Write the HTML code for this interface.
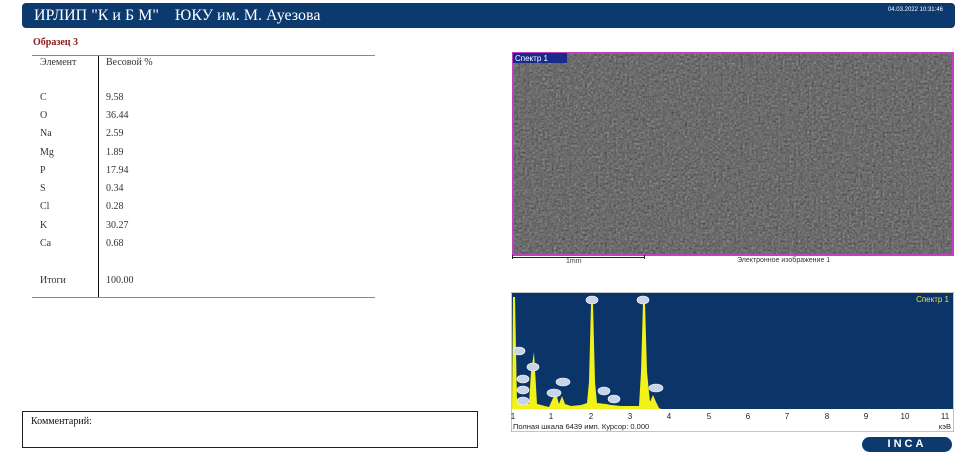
<!DOCTYPE html>
<html><head><meta charset="utf-8"><style>
body{margin:0;width:974px;height:461px;background:#fff;position:relative;overflow:hidden;font-family:"Liberation Serif",serif;}
.a{position:absolute;}
.hdr{left:22px;top:3px;width:933px;height:25px;background:#0d3a6e;border-radius:4px;color:#fff;}
.t{font-size:10px;color:#333;}
.s{font-family:"Liberation Sans",sans-serif;}
</style></head><body>
<div class="a hdr"><span class="a" style="left:12px;top:4px;font-size:16px;">ИРЛИП "К и Б М"&nbsp;&nbsp;&nbsp; ЮКУ им. М. Ауезова</span>
<span class="a s" style="right:12px;top:4px;font-size:6px;">04.03.2022 10:31:46</span></div>
<div class="a" style="left:33px;top:37px;font-size:10px;color:#8b1a1a;font-weight:bold;">Образец 3</div>
<div class="a" style="left:32px;top:55px;width:343px;height:1px;background:#888"></div>
<div class="a" style="left:32px;top:297px;width:343px;height:1px;background:#888"></div>
<div class="a" style="left:98px;top:56px;width:1px;height:241px;background:#111"></div>
<div class="a t" style="left:40px;top:57px">Элемент</div><div class="a t" style="left:106px;top:57px">Весовой %</div>
<div class="a t" style="left:40px;top:92px">C</div><div class="a t" style="left:106px;top:92px">9.58</div>
<div class="a t" style="left:40px;top:110px">O</div><div class="a t" style="left:106px;top:110px">36.44</div>
<div class="a t" style="left:40px;top:128px">Na</div><div class="a t" style="left:106px;top:128px">2.59</div>
<div class="a t" style="left:40px;top:147px">Mg</div><div class="a t" style="left:106px;top:147px">1.89</div>
<div class="a t" style="left:40px;top:165px">P</div><div class="a t" style="left:106px;top:165px">17.94</div>
<div class="a t" style="left:40px;top:183px">S</div><div class="a t" style="left:106px;top:183px">0.34</div>
<div class="a t" style="left:40px;top:201px">Cl</div><div class="a t" style="left:106px;top:201px">0.28</div>
<div class="a t" style="left:40px;top:220px">K</div><div class="a t" style="left:106px;top:220px">30.27</div>
<div class="a t" style="left:40px;top:238px">Ca</div><div class="a t" style="left:106px;top:238px">0.68</div>
<div class="a t" style="left:40px;top:275px">Итоги</div><div class="a t" style="left:106px;top:275px">100.00</div>

<div class="a" style="left:22px;top:411px;width:454px;height:35px;border:1px solid #222;"><span class="a t" style="left:8px;top:4px;color:#111">Комментарий:</span></div>

<svg class="a" style="left:512px;top:52px" width="442" height="204">
<filter id="n"><feTurbulence type="fractalNoise" baseFrequency="0.45" numOctaves="3" seed="3"/><feColorMatrix type="saturate" values="0"/><feComponentTransfer><feFuncR type="linear" slope="1.6" intercept="-0.4"/><feFuncG type="linear" slope="1.6" intercept="-0.4"/><feFuncB type="linear" slope="1.6" intercept="-0.4"/></feComponentTransfer></filter>
<rect width="442" height="204" fill="#555557"/>
<rect width="442" height="204" filter="url(#n)" opacity="0.55"/>
<rect x="1" y="1" width="440" height="202" fill="none" stroke="#c040c0" stroke-width="2"/>
<rect x="1" y="1" width="54" height="10" fill="#1a2a8a"/>
<text x="3" y="9" font-family="Liberation Sans" font-size="8" fill="#fff">Спектр 1</text>
</svg>
<div class="a" style="left:512px;top:257px;width:133px;height:1px;background:#222"></div>
<div class="a" style="left:512px;top:255px;width:1px;height:4px;background:#222"></div>
<div class="a" style="left:644px;top:255px;width:1px;height:4px;background:#222"></div>
<div class="a s" style="left:566px;top:258px;font-size:7px;color:#444">1mm</div>
<div class="a s" style="left:737px;top:257px;font-size:7px;color:#333">Электронное изображение 1</div>

<svg class="a" style="left:511px;top:292px" width="443" height="140" font-family="Liberation Sans">
<rect x="0" y="0" width="443" height="140" fill="#fff" stroke="#888"/>
<rect x="1" y="1" width="441" height="116" fill="#0b3468"/>
<path d="M1,117 L2,5 L4,5 L6,110 L10,112 L14,108 L18,112 L20,80 L23,60 L26,112 L30,113 L38,115 L42,106 L45,101 L48,112 L51,104 L54,112 L60,114 L70,113 L76,111 L78,90 L80,12 L82,12 L84,90 L86,111 L95,112 L100,113 L110,114 L128,114 L130,80 L132,10 L134,10 L136,80 L139,110 L142,103 L145,110 L148,116 L150,117 Z" fill="#f2f21a"/>
<g fill="#c8d4e8" stroke="#fff" stroke-width="0.6">
<ellipse cx="81" cy="8" rx="6" ry="4"/><ellipse cx="132" cy="8" rx="6" ry="4"/>
<ellipse cx="8" cy="59" rx="6" ry="4"/><ellipse cx="22" cy="75" rx="6" ry="4"/>
<ellipse cx="12" cy="87" rx="6" ry="4"/><ellipse cx="12" cy="98" rx="6" ry="4"/><ellipse cx="12" cy="109" rx="6" ry="4"/>
<ellipse cx="52" cy="90" rx="7" ry="4"/><ellipse cx="43" cy="101" rx="7" ry="4"/>
<ellipse cx="93" cy="99" rx="6" ry="4"/><ellipse cx="103" cy="107" rx="6" ry="4"/><ellipse cx="145" cy="96" rx="7" ry="4"/>
</g>
<text x="438" y="10" font-size="8" fill="#e8e040" text-anchor="end">Спектр 1</text>
<g font-size="8" fill="#222" text-anchor="middle">
<text x="2" y="127">1</text><text x="40" y="127">1</text><text x="80" y="127">2</text><text x="119" y="127">3</text><text x="158" y="127">4</text><text x="198" y="127">5</text><text x="237" y="127">6</text><text x="276" y="127">7</text><text x="316" y="127">8</text><text x="355" y="127">9</text><text x="394" y="127">10</text><text x="434" y="127">11</text>
</g>
<text x="2" y="137" font-size="7.5" fill="#222">Полная шкала 6439 имп. Курсор: 0.000</text>
<text x="440" y="137" font-size="7.5" fill="#222" text-anchor="end">кэВ</text>
</svg>
<div class="a" style="left:862px;top:437px;width:90px;height:15px;background:#0d3a6e;border-radius:8px;color:#fff;font:bold 11px 'Liberation Sans',sans-serif;text-align:center;line-height:15px;letter-spacing:3px;">INCA</div>
</body></html>
